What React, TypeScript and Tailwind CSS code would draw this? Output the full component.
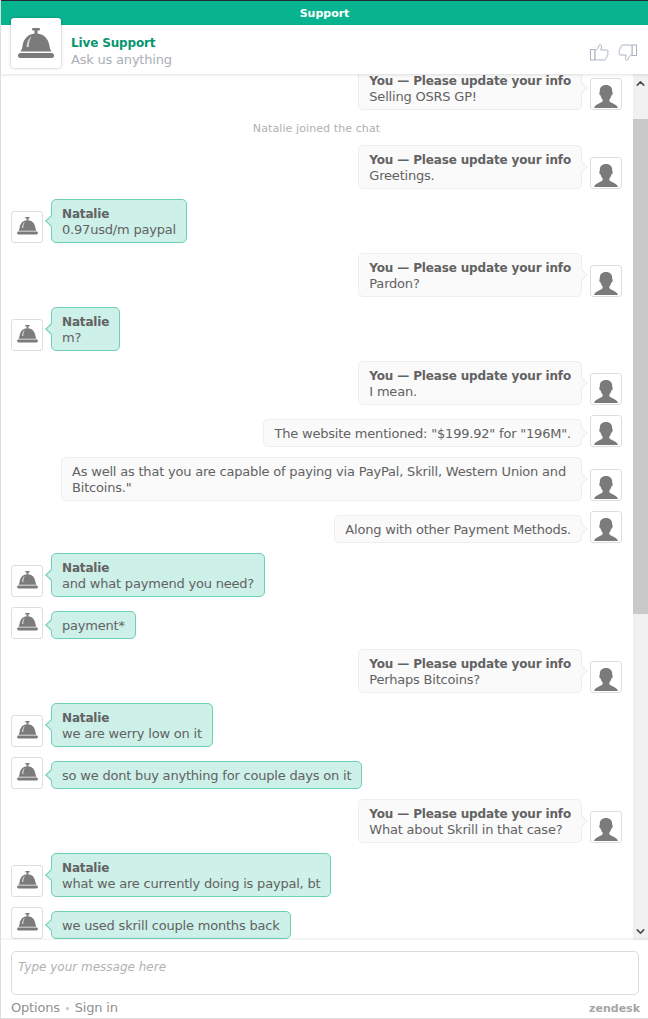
import React from 'react';
import { ChevronUp, ChevronDown } from 'lucide-react';

type Message =
  | { from: 'you'; text: string; named?: boolean }
  | { from: 'agent'; text: string; named?: boolean }
  | { from: 'system'; text: string };

const messages: Message[] = [
  { from: 'you', text: 'Selling OSRS GP!', named: true },
  { from: 'system', text: 'Natalie joined the chat' },
  { from: 'you', text: 'Greetings.', named: true },
  { from: 'agent', text: '0.97usd/m paypal', named: true },
  { from: 'you', text: 'Pardon?', named: true },
  { from: 'agent', text: 'm?', named: true },
  { from: 'you', text: 'I mean.', named: true },
  { from: 'you', text: 'The website mentioned: "$199.92" for "196M".' },
  { from: 'you', text: 'As well as that you are capable of paying via PayPal, Skrill, Western Union and Bitcoins."' },
  { from: 'you', text: 'Along with other Payment Methods.' },
  { from: 'agent', text: 'and what paymend you need?', named: true },
  { from: 'agent', text: 'payment*' },
  { from: 'you', text: 'Perhaps Bitcoins?', named: true },
  { from: 'agent', text: 'we are werry low on it', named: true },
  { from: 'agent', text: 'so we dont buy anything for couple days on it' },
  { from: 'you', text: 'What about Skrill in that case?', named: true },
  { from: 'agent', text: 'what we are currently doing is paypal, bt', named: true },
  { from: 'agent', text: 'we used skrill couple months back' },
];

const BellIcon = ({ className }: { className?: string }) => (
  <svg viewBox="0 0 36 31" className={className} fill="#7b7b7b">
    <rect x="14" y="0" width="8" height="2.400" rx="1.200" />
    <rect x="16.500" y="1.500" width="3" height="5" />
    <path d="M18 5.500C10 5.500 5.500 11 4.500 18C4.200 20.500 3.500 22 2.500 23.500H33.500C32.500 22 31.800 20.500 31.500 18C30.500 11 26 5.500 18 5.500Z" />
    <path d="M8.500 19C8.800 14 10.500 10.500 13.500 8.300C11.800 11.500 11 14.500 10.700 19Z" fill="#fff" opacity="0.7" />
    <rect x="0" y="25" width="36" height="5" rx="2.500" />
  </svg>
);

const PersonIcon = () => (
  <svg viewBox="0 0 24 23" className="w-[24px] h-[23px] mb-[1px]" fill="#7b7b7b">
    <path d="M12 0C7.800 0 5.800 2.500 5.800 6C5.800 7 5.300 7.500 5.300 8.500C5.300 9.500 6 10.200 6.600 10.600C7 12.300 7.800 13.600 8.600 14.500V16.200C7.500 18 1.500 18.500 0 23H24C22.500 18.500 16.500 18 15.400 16.200V14.500C16.200 13.600 17 12.300 17.400 10.600C18 10.200 18.700 9.500 18.700 8.500C18.700 7.500 18.200 7 18.200 6C18.200 2.500 16.200 0 12 0Z" />
  </svg>
);

const thumbPath =
  'M5 6.500C7 6 8.500 4 9 1.500C9.200 0.500 11.500 0.300 11.500 2.500C11.500 4 11 5 10.800 6H16.500C18.500 6 18.500 8 17.500 8.500C18.500 9.500 18 11 17 11.300C17.500 12.500 16.800 13.500 16 13.800C16 15.500 15 16 14 16H7.500C6.500 16 6 15.500 5 15.500Z';

const ThumbUp = () => (
  <svg viewBox="0 0 19 17" className="w-[19px] h-[17px]" fill="#fff" stroke="#a9b3c4" strokeWidth="1">
    <rect x="0.500" y="5.500" width="4.500" height="10.500" />
    <path d={thumbPath} />
  </svg>
);

const ThumbDown = () => (
  <svg viewBox="0 0 19 17" className="w-[19px] h-[17px] rotate-180" fill="#fff" stroke="#a9b3c4" strokeWidth="1">
    <rect x="0.500" y="5.500" width="4.500" height="10.500" />
    <path d={thumbPath} />
  </svg>
);

const Avatar = ({ children }: { children: React.ReactNode }) => (
  <div className="w-[32px] h-[32px] shrink-0 bg-white border border-[#dedede] rounded-[3px] flex items-end justify-center overflow-hidden">
    {children}
  </div>
);

const Bubble = ({ m }: { m: Exclude<Message, { from: 'system' }> }) => {
  const isYou = m.from === 'you';
  return (
    <div
      className={
        isYou
          ? 'relative border border-[#eeeeee] bg-[#fafafa] rounded-[5px] px-[10px] pt-[6px] pb-[4px] leading-[16px]'
          : 'relative border border-[#6fcfb4] bg-[#cdf0e8] rounded-[5px] px-[10px] pt-[6px] pb-[4px] leading-[16px]'
      }
    >
      <span
        className={
          isYou
            ? 'absolute top-1/2 -right-[5px] -mt-[4px] w-[8px] h-[8px] rotate-45 bg-[#fafafa] border-t border-r border-[#eeeeee]'
            : 'absolute top-1/2 -left-[5px] -mt-[4px] w-[8px] h-[8px] rotate-45 bg-[#cdf0e8] border-b border-l border-[#6fcfb4]'
        }
      />
      {m.named && (
        <div className="font-bold text-[12px] tracking-[-0.15px]">
          {isYou ? 'You — Please update your info' : 'Natalie'}
        </div>
      )}
      <div>{m.text}</div>
    </div>
  );
};

const Row = ({ m }: { m: Exclude<Message, { from: 'system' }> }) => {
  if (m.from === 'you') {
    return (
      <div className="flex items-end justify-end gap-[8px] pl-[50px]">
        <Bubble m={m} />
        <Avatar>
          <PersonIcon />
        </Avatar>
      </div>
    );
  }
  return (
    <div className="flex items-end gap-[8px]">
      <Avatar>
        <BellIcon className="w-[21px] h-[18px] mb-[7px]" />
      </Avatar>
      <Bubble m={m} />
    </div>
  );
};

export default function App() {
  return (
    <div
      className="w-[648px] h-[1019px] flex flex-col bg-white overflow-hidden text-[13px] tracking-[-0.2px] text-[#626262] border-l border-b border-[#dddddd]"
      style={{ fontFamily: '"DejaVu Sans", Verdana, sans-serif' }}
    >
      <div className="h-[25px] shrink-0 bg-[#07b48f] border-t border-[#222b33] pt-[2px] flex items-center justify-center text-white font-bold text-[11px] tracking-normal">
        Support
      </div>

      <div className="relative z-10 h-[49px] shrink-0 bg-white shadow-[0_1px_3px_rgba(0,0,0,0.12)] flex items-center pl-[10px] pr-[11px]">
        <div className="w-[50px] h-[50px] -mt-[7px] shrink-0 self-start bg-white rounded-[3px] shadow-[0_0_3px_rgba(0,0,0,0.3)] flex items-center justify-center">
          <BellIcon className="w-[36px] h-[31px]" />
        </div>
        <div className="ml-[10px] flex-1 leading-[16px] pt-[4px]">
          <div className="font-bold text-[#07966f] text-[12px] tracking-[-0.15px]">Live Support</div>
          <div className="text-[#aaaeb5] text-[13px] mt-[1px]">Ask us anything</div>
        </div>
        <div className="flex items-center gap-[9px] mt-[6px]">
          <ThumbUp />
          <ThumbDown />
        </div>
      </div>

      <div className="flex-1 min-h-0 flex">
        <div className="flex-1 min-w-0 overflow-hidden pl-[10px] pr-[11px]">
          <div className="flex flex-col gap-[10px] -mt-[8px]">
            {messages.map((m, i) =>
              m.from === 'system' ? (
                <div key={i} className="text-center text-[11px] tracking-[0.1px] text-[#b0b0b0] h-[15px] leading-[17px]">
                  {m.text}
                </div>
              ) : (
                <Row key={i} m={m} />
              ),
            )}
          </div>
        </div>
        <div className="w-[15px] shrink-0 bg-[#f1f1f1] flex flex-col items-center">
          <div className="h-[45px] w-full flex justify-center pt-[3px]">
            <ChevronUp size={13} strokeWidth={3} className="text-[#505050]" />
          </div>
          <div className="h-[495px] w-full bg-[#c9c9c9]" />
          <div className="flex-1 w-full flex justify-center items-end pb-[2px]">
            <ChevronDown size={13} strokeWidth={3} className="text-[#505050]" />
          </div>
        </div>
      </div>

      <div className="h-[78px] shrink-0 bg-white shadow-[0_-1px_3px_rgba(0,0,0,0.08)] z-10 px-[10px] pt-[11px]">
        <div className="h-[44px] mr-[-1px] border border-[#dcdcdc] rounded-[5px] px-[6px] pt-[7px] italic text-[12px] tracking-normal text-[#b2b2b2] leading-[16px]">
          Type your message here
        </div>
        <div className="flex items-center justify-between mt-[4px] leading-[16px] mr-[-2px]">
          <div className="flex items-center gap-[6px] text-[13px] text-[#909090]">
            <span>Options</span>
            <span className="w-[3px] h-[3px] rounded-full bg-[#c4c4c4]" />
            <span>Sign in</span>
          </div>
          <span className="font-bold text-[11px] tracking-normal text-[#a5a5a5] pt-[2px]">zendesk</span>
        </div>
      </div>
    </div>
  );
}
